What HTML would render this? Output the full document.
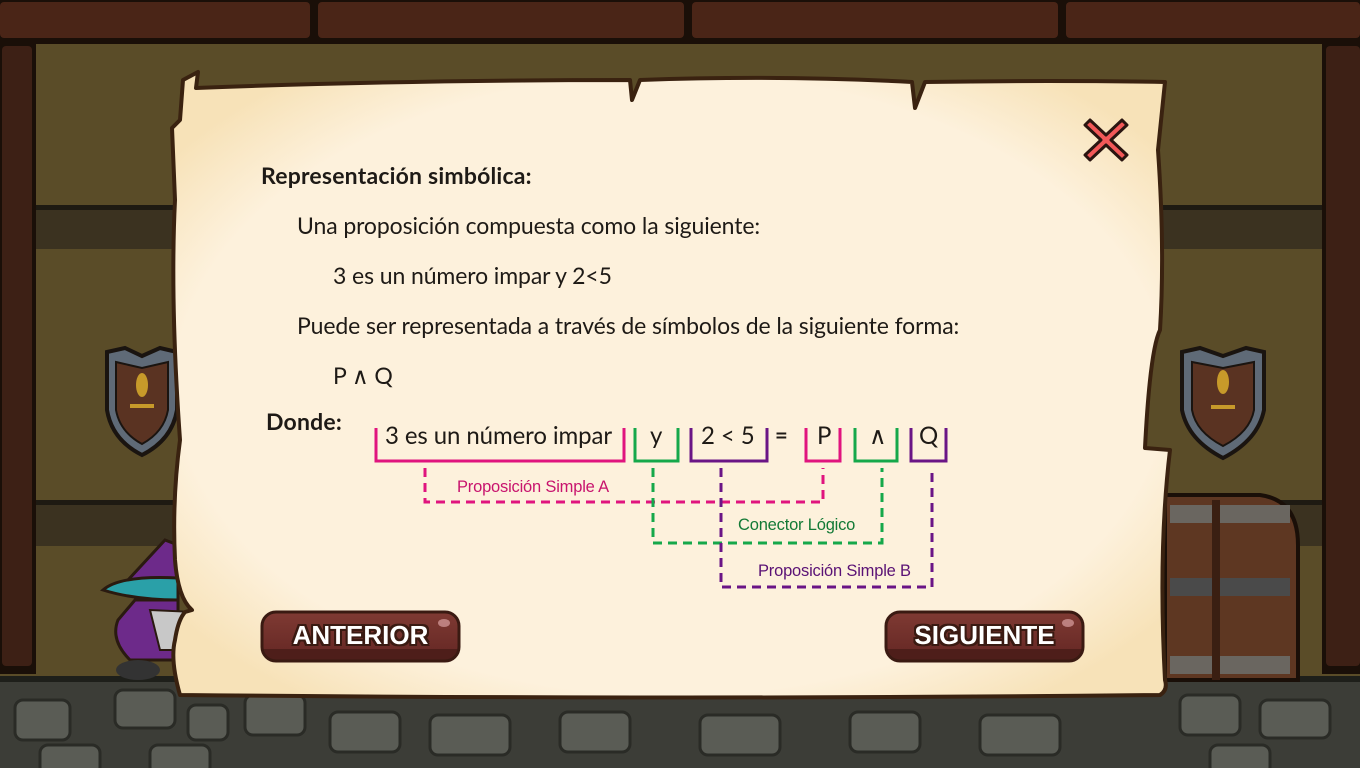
<!DOCTYPE html>
<html><head><meta charset="utf-8"><style>
html,body{margin:0;padding:0;width:1360px;height:768px;overflow:hidden;background:#594b28;}
#bg{position:absolute;left:0;top:0}
.t{position:absolute;font-family:"Lato","Liberation Sans",sans-serif;color:#1e1a16;white-space:nowrap;letter-spacing:-0.1px}
.b{font-weight:bold;letter-spacing:0.2px}
.lab{position:absolute;font-family:"Liberation Sans",sans-serif;font-size:16.5px;letter-spacing:-0.2px;white-space:nowrap}
.btn{position:absolute;font-family:"Liberation Sans",sans-serif;font-weight:bold;font-size:26px;color:#fff;text-align:center;line-height:50px;letter-spacing:0px;
text-shadow:-2px -2px 0 #3a1a12,2px -2px 0 #3a1a12,-2px 2px 0 #3a1a12,2px 2px 0 #3a1a12,0 2px 0 #3a1a12,0 -2px 0 #3a1a12,2px 0 0 #3a1a12,-2px 0 0 #3a1a12}
</style></head><body>
<svg id="bg" width="1360" height="768" viewBox="0 0 1360 768">
<defs>
<radialGradient id="pg" cx="50%" cy="50%" r="62%"><stop offset="0.8" stop-color="#fdf1dc"/><stop offset="1" stop-color="#f7e2b8"/></radialGradient>
<linearGradient id="bt" x1="0" y1="0" x2="0" y2="1"><stop offset="0" stop-color="#7f3a33"/><stop offset="0.75" stop-color="#6a2b27"/><stop offset="0.76" stop-color="#4e1e1a"/><stop offset="1" stop-color="#4e1e1a"/></linearGradient>
</defs>
<rect width="1360" height="768" fill="#5a4c28"/>
<rect x="0" y="205" width="1360" height="44" fill="#3b3220"/>
<rect x="0" y="205" width="1360" height="5" fill="#1e1a12"/>
<rect x="0" y="500" width="1360" height="46" fill="#3b3220"/>
<rect x="0" y="500" width="1360" height="5" fill="#1e1a12"/>
<rect x="0" y="0" width="1360" height="44" fill="#1a0f08"/>
<rect x="0" y="2" width="310" height="36" rx="4" fill="#4a2517"/>
<rect x="318" y="2" width="366" height="36" rx="4" fill="#4a2517"/>
<rect x="692" y="2" width="366" height="36" rx="4" fill="#4a2517"/>
<rect x="1066" y="2" width="294" height="36" rx="4" fill="#4a2517"/>
<rect x="0" y="44" width="36" height="630" fill="#1a0f08"/>
<rect x="2" y="46" width="30" height="620" rx="4" fill="#3d2015"/>
<rect x="1322" y="44" width="38" height="630" fill="#1a0f08"/>
<rect x="1326" y="46" width="34" height="620" rx="4" fill="#3d2015"/>
<rect x="0" y="676" width="1360" height="92" fill="#3c3d37"/>
<rect x="0" y="676" width="1360" height="6" fill="#1e1f1a"/>
<g fill="#5a5c55" stroke="#2a2b26" stroke-width="3">
<rect x="15" y="700" width="55" height="40" rx="8"/><rect x="115" y="690" width="60" height="38" rx="8"/>
<rect x="188" y="705" width="40" height="35" rx="8"/><rect x="245" y="695" width="60" height="40" rx="8"/>
<rect x="40" y="745" width="60" height="30" rx="8"/><rect x="150" y="745" width="60" height="30" rx="8"/>
<rect x="1180" y="695" width="60" height="40" rx="8"/><rect x="1260" y="700" width="70" height="38" rx="8"/>
<rect x="1210" y="745" width="60" height="30" rx="8"/>
<rect x="330" y="712" width="70" height="40" rx="8"/><rect x="430" y="715" width="80" height="40" rx="8"/>
<rect x="560" y="712" width="70" height="40" rx="8"/><rect x="700" y="715" width="80" height="40" rx="8"/>
<rect x="850" y="712" width="70" height="40" rx="8"/><rect x="980" y="715" width="80" height="40" rx="8"/>
</g>
<g stroke="#1a1410" stroke-width="4">
<path d="M107 352 L125 348 L142 356 L160 348 L177 352 L177 410 Q172 440 142 455 Q112 440 107 410Z" fill="#5f6a77"/>
<path d="M116 362 L142 368 L168 362 L168 410 Q164 432 142 444 Q120 432 116 410Z" fill="#5a3322" stroke-width="2"/>
<path d="M1182 352 L1200 348 L1223 356 L1246 348 L1264 352 L1264 410 Q1258 440 1223 458 Q1188 440 1182 410Z" fill="#5f6a77"/>
<path d="M1192 362 L1223 368 L1254 362 L1254 410 Q1250 432 1223 446 Q1196 432 1192 410Z" fill="#5a3322" stroke-width="2"/>
</g>
<g fill="#c79a2a"><ellipse cx="142" cy="385" rx="6" ry="12"/><ellipse cx="1223" cy="382" rx="6" ry="12"/><rect x="130" y="404" width="24" height="4"/><rect x="1211" y="405" width="24" height="4"/></g>
<path d="M1165 680 L1165 495 L1260 495 Q1298 500 1298 545 L1298 680Z" fill="#5e3722" stroke="#1a0f08" stroke-width="4"/>
<rect x="1170" y="505" width="120" height="18" fill="#6a6660"/>
<rect x="1170" y="578" width="120" height="18" fill="#4a4a4a"/>
<rect x="1170" y="656" width="120" height="18" fill="#6a6660"/>
<rect x="1212" y="500" width="8" height="180" fill="#3a1f12"/>
<path d="M128 580 L165 540 L178 545 L178 600 Z" fill="#6d2a8a" stroke="#2a1a10" stroke-width="3"/>
<path d="M103 590 Q120 575 178 578 L178 600 Q135 600 103 590Z" fill="#2aa0a8" stroke="#2a1a10" stroke-width="3"/>
<path d="M135 600 L178 600 L178 660 L130 660 Q110 640 118 620Z" fill="#6d2a8a" stroke="#2a1a10" stroke-width="3"/>
<path d="M150 610 L195 612 L175 650 L160 650Z" fill="#c8c8c8" stroke="#2a1a10" stroke-width="2"/>
<ellipse cx="138" cy="670" rx="22" ry="10" fill="#333"/>
<path d="M183 80 L198 72 L196 88 Q400 80 630 80 L632 100 L640 80 Q780 75 912 82 L915 108 L925 82 Q1050 80 1165 82 L1158 150 Q1165 250 1160 330 Q1150 350 1145 448 L1170 450 Q1158 550 1165 680 Q1168 690 1160 695 Q700 700 180 695 Q170 660 175 640 Q178 620 185 612 L192 610 Q178 598 175 560 Q172 500 180 440 Q170 300 175 200 L172 128 L180 120 Z" fill="url(#pg)" stroke="#3a2210" stroke-width="4" stroke-linejoin="round"/>
<g transform="translate(1106 140)">
<path d="M-16 -20 L0 -5 L16 -20 L21 -15 L5 0 L21 15 L16 20 L0 5 L-16 20 L-21 15 L-5 0 L-21 -15Z" fill="#f25858" stroke="#2a1510" stroke-width="3" stroke-linejoin="round"/>
</g>
<g fill="none" stroke-width="3">
<path d="M376 428 V461 H624 V428" stroke="#e0147e"/>
<path d="M635 428 V461 H678 V428" stroke="#15a84a"/>
<path d="M691 428 V461 H767 V428" stroke="#6a1586"/>
<path d="M806 428 V461 H840 V428" stroke="#e0147e"/>
<path d="M855 428 V461 H897 V428" stroke="#15a84a"/>
<path d="M911 428 V461 H946 V428" stroke="#6a1586"/>
<g stroke-dasharray="9 6" stroke-width="3">
<path d="M425 468 V502 H823 V468" stroke="#e0147e"/>
<path d="M653 468 V543 H882 V468" stroke="#15a84a"/>
<path d="M721 468 V587 H932 V468" stroke="#6a1586"/>
</g>
</g>
<rect x="262" y="612" width="197" height="49" rx="14" fill="url(#bt)" stroke="#3a1a12" stroke-width="3"/>
<rect x="886" y="612" width="197" height="49" rx="14" fill="url(#bt)" stroke="#3a1a12" stroke-width="3"/>
<ellipse cx="444" cy="623" rx="6" ry="4" fill="#d8a0a0" opacity=".7"/>
<ellipse cx="1068" cy="623" rx="6" ry="4" fill="#d8a0a0" opacity=".7"/>
</svg>

<div class="t b" style="left:261px;top:161px;font-size:23px">Representación simbólica:</div>
<div class="t" style="left:297px;top:211px;font-size:23px">Una proposición compuesta como la siguiente:</div>
<div class="t" style="left:333px;top:261px;font-size:23px">3 es un número impar y 2&lt;5</div>
<div class="t" style="left:297px;top:311px;font-size:23px">Puede ser representada a través de símbolos de la siguiente forma:</div>
<div class="t" style="left:333px;top:361px;font-size:23px">P ∧ Q</div>
<div class="t b" style="left:266px;top:407px;font-size:23px">Donde:</div>
<div class="t" style="left:385px;top:421px;font-size:24px">3 es un número impar</div>
<div class="t" style="left:650px;top:421px;font-size:24px">y</div>
<div class="t" style="left:701px;top:421px;font-size:24px">2 &lt; 5</div>
<div class="t b" style="left:775px;top:421px;font-size:22px">=</div>
<div class="t" style="left:817px;top:421px;font-size:24px">P</div>
<div class="t" style="left:869px;top:421px;font-size:24px">∧</div>
<div class="t" style="left:919px;top:421px;font-size:24px">Q</div>
<div class="lab" style="left:457px;top:478px;color:#c8146e">Proposición Simple A</div>
<div class="lab" style="left:738px;top:516px;color:#137a36">Conector Lógico</div>
<div class="lab" style="left:758px;top:562px;color:#5a1275">Proposición Simple B</div>
<div class="btn" style="left:262px;top:610px;width:197px">ANTERIOR</div>
<div class="btn" style="left:886px;top:610px;width:197px">SIGUIENTE</div>
</body></html>
